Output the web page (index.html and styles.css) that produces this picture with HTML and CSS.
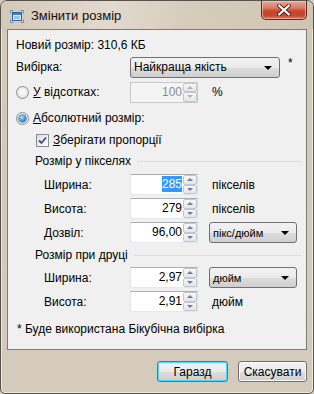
FILE: index.html
```html
<!DOCTYPE html>
<html lang="uk">
<head>
  <meta charset="UTF-8">
  <title>Змінити розмір</title>
  <link rel="stylesheet" href="styles.css">
</head>
<body>
  <div class="window">
    <div class="titlebar">
      <svg class="app-icon" width="14" height="13" viewBox="0 0 14 13">
        <path d="M0.5 3.5V0.5H3.5M10.5 0.5H13.5V3.5M13.5 9.5V12.5H10.5M3.5 12.5H0.5V9.5" fill="none" stroke="#6d8fb3" stroke-width="1"/>
        <rect x="2.5" y="2.5" width="9" height="8" fill="#dfeefb" stroke="#2f5f9e"/>
        <rect x="3" y="3" width="8" height="2" fill="#3f7fcf"/>
        <rect x="4" y="6" width="6" height="3" fill="#9cc5ee"/>
      </svg>
      <span class="title">Змінити розмір</span>
      <div class="close-btn">
        <svg width="14" height="12" viewBox="0 0 14 12">
          <path d="M2 1.5L12 10.5M12 1.5L2 10.5" stroke="#5a1f14" stroke-width="4" stroke-linecap="round"/>
          <path d="M2 1.5L12 10.5M12 1.5L2 10.5" stroke="#ffffff" stroke-width="2.2" stroke-linecap="round"/>
        </svg>
      </div>
    </div>

    <div class="panel">
      <div class="row row-size">Новий розмір: 310,6 КБ</div>

      <div class="row row-sample">
        <span class="lbl">Вибірка:</span>
        <div class="combo combo-wide">Найкраща якість<i class="arrow"></i></div>
        <span class="star">*</span>
      </div>

      <div class="row row-pct">
        <span class="lbl radio-lbl"><i class="radio"></i><span><u>У</u> відсотках:</span></span>
        <div class="numbox disabled"><span class="val">100</span><span class="spin"><b class="up"></b><b class="down"></b></span></div>
        <span class="unit">%</span>
      </div>

      <div class="row row-abs">
        <span class="radio-lbl"><i class="radio checked"></i><span><u>А</u>бсолютний розмір:</span></span>
      </div>

      <div class="row row-keep">
        <i class="check">
          <svg width="9" height="9" viewBox="0 0 9 9"><path d="M1 4.5L3.5 7L8 1.5" fill="none" stroke="#3b4f82" stroke-width="1.8"/></svg>
        </i>
        <span><u>З</u>берігати пропорції</span>
      </div>

      <div class="row group-head gh-pixels"><span>Розмір у пікселях</span><i class="line"></i></div>

      <div class="row field first">
        <span class="lbl sub">Ширина:</span>
        <div class="numbox"><span class="val"><em class="sel">285</em></span><span class="spin"><b class="up"></b><b class="down"></b></span></div>
        <span class="unit">пікселів</span>
      </div>
      <div class="row field">
        <span class="lbl sub">Висота:</span>
        <div class="numbox"><span class="val">279</span><span class="spin"><b class="up"></b><b class="down"></b></span></div>
        <span class="unit">пікселів</span>
      </div>
      <div class="row field">
        <span class="lbl sub">Дозвіл:</span>
        <div class="numbox"><span class="val">96,00</span><span class="spin"><b class="up"></b><b class="down"></b></span></div>
        <div class="combo combo-unit">пікс/дюйм<i class="arrow"></i></div>
      </div>

      <div class="row group-head gh-print"><span>Розмір при друці</span><i class="line"></i></div>

      <div class="row field first">
        <span class="lbl sub">Ширина:</span>
        <div class="numbox"><span class="val">2,97</span><span class="spin"><b class="up"></b><b class="down"></b></span></div>
        <div class="combo combo-unit">дюйм<i class="arrow"></i></div>
      </div>
      <div class="row field">
        <span class="lbl sub">Висота:</span>
        <div class="numbox"><span class="val">2,91</span><span class="spin"><b class="up"></b><b class="down"></b></span></div>
        <span class="unit">дюйм</span>
      </div>

      <div class="row note">* Буде використана Бікубічна вибірка</div>
    </div>

    <div class="buttons">
      <button class="btn default">Гаразд</button>
      <button class="btn">Скасувати</button>
    </div>
  </div>
</body>
</html>
```

FILE: styles.css
```css
* {
  box-sizing: border-box;
}
body {
  margin: 0;
  font-family: 'Liberation Sans', Arial, sans-serif;
  font-size: 12px;
  color: #000;
  background: #d4cbbc;
}
.window {
  width: 314px;
  height: 394px;
  border: 1px solid #57534c;
  border-radius: 7px 7px 5px 5px;
  background: linear-gradient(to bottom, #d9d0c2 0px, #d3c9b9 30px, #d4cbbd 100%);
  box-shadow: inset 0 0 0 1px #ece6dc;
  overflow: hidden;
}
.titlebar {
  height: 28px;
  display: flex;
  align-items: flex-start;
  background: linear-gradient(100deg, #d4c9b8 0%, #e2dace 35%, #d6ccbc 60%, #cfc5b4 100%);
}
.app-icon {
  margin: 9px 0 0 9px;
}
.title {
  margin: 7px 0 0 7px;
  font-size: 13px;
  color: #111;
}
.close-btn {
  margin-left: auto;
  margin-right: 6px;
  width: 46px;
  height: 19px;
  border: 1px solid #5e2a1f;
  border-top: none;
  border-radius: 0 0 5px 5px;
  background: linear-gradient(to bottom, #e9a894 0%, #d77a62 40%, #c8452b 55%, #c24a30 80%, #d8775c 100%);
  box-shadow: inset 0 0 0 1px rgba(255, 210, 190, 0.6);
  display: flex;
  align-items: center;
  justify-content: center;
}
.panel {
  margin: 0 6px;
  height: 321px;
  border: 1px solid #7f7a72;
  background: #f0f0f0;
  padding: 5px 5px 0 8px;
}
.row {
  display: flex;
  align-items: center;
}
.row-size {
  height: 20px;
}
.row-sample {
  height: 22px;
  margin-top: 1px;
}
.row-pct {
  height: 22px;
  margin-top: 3px;
}
.row-abs {
  height: 20px;
  margin-top: 5px;
}
.row-keep {
  height: 20px;
  margin-top: 2px;
  padding-left: 20px;
}
.lbl {
  width: 114px;
  flex-shrink: 0;
}
.lbl.sub {
  padding-left: 28px;
}
.radio-lbl {
  display: flex;
  align-items: center;
}
.radio {
  width: 13px;
  height: 13px;
  border-radius: 50%;
  border: 1px solid #8b8c8d;
  background: radial-gradient(circle at 50% 45%, #ffffff 0%, #f1f1f1 40%, #d5d6d8 100%);
  margin-right: 4px;
  position: relative;
}
.radio.checked::after {
  content: "";
  position: absolute;
  left: 2px;
  top: 2px;
  width: 7px;
  height: 7px;
  border-radius: 50%;
  background: radial-gradient(circle at 40% 35%, #bde8fb 0%, #4aa3dd 45%, #1c5a9c 100%);
  box-shadow: 0 0 0 0.5px #1a4a7a;
}
.check {
  width: 13px;
  height: 13px;
  border: 1px solid #8b8c8d;
  background: linear-gradient(135deg, #dcdcdc, #ffffff);
  margin-right: 4px;
  display: flex;
  align-items: center;
  justify-content: center;
}
.combo {
  height: 21px;
  border: 1px solid #707070;
  border-radius: 3px;
  background: linear-gradient(to bottom, #f2f2f2 0%, #ebebeb 50%, #dddddd 51%, #cfcfcf 100%);
  display: flex;
  align-items: center;
  padding-left: 3px;
  position: relative;
}
.combo-wide {
  width: 150px;
}
.combo-unit {
  width: 88px;
  margin-left: 11px;
  font-size: 11px;
}
.arrow {
  position: absolute;
  right: 7px;
  top: 8px;
  border-left: 4px solid transparent;
  border-right: 4px solid transparent;
  border-top: 4px solid #000;
}
.star {
  margin: -8px 0 0 8px;
}
.numbox {
  width: 68px;
  height: 21px;
  display: flex;
  border: 1px solid #abadb3;
  border-color: #abadb3 #dbdfe6 #e3e9ef #e2e3ea;
  background: #fff;
}
.numbox .val {
  flex: 1;
  text-align: right;
  padding-right: 1px;
  line-height: 19px;
}
.numbox.disabled {
  border-color: #c9c9c9;
  background: #f4f4f4;
}
.numbox.disabled .val {
  color: #8d8d8d;
}
.sel {
  font-style: normal;
  background: #3399ff;
  color: #fff;
  padding: 1px 0;
}
.spin {
  width: 14px;
  display: flex;
  flex-direction: column;
}
.spin b {
  flex: 1;
  border: 1px solid #c2c7cf;
  border-radius: 2px;
  background: linear-gradient(to bottom, #f7f7f7, #e4e6ea);
  display: flex;
  align-items: center;
  justify-content: center;
}
.spin .up::after {
  content: "";
  border-left: 3px solid transparent;
  border-right: 3px solid transparent;
  border-bottom: 3px solid #6a7c96;
}
.spin .down::after {
  content: "";
  border-left: 3px solid transparent;
  border-right: 3px solid transparent;
  border-top: 3px solid #6a7c96;
}
.disabled .spin .up::after {
  border-bottom-color: #b5b5b5;
}
.disabled .spin .down::after {
  border-top-color: #b5b5b5;
}
.unit {
  margin-left: 14px;
}
.group-head {
  padding-left: 19px;
}
.group-head .line {
  flex: 1;
  height: 1px;
  background: #d9dde3;
  margin-left: 6px;
}
.gh-pixels {
  height: 18px;
  margin-top: 2px;
}
.gh-print {
  height: 16px;
  margin-top: 4px;
}
.field {
  height: 21px;
  margin-top: 3px;
}
.field.first {
  margin-top: 4px;
}
.note {
  height: 16px;
  margin-top: 9px;
  padding-left: 1px;
}
.buttons {
  display: flex;
  justify-content: flex-end;
  gap: 10px;
  margin-top: 11px;
  padding-right: 6px;
}
.btn {
  height: 21px;
  width: 69px;
  font-family: inherit;
  font-size: 12px;
  border: 1px solid #707070;
  border-radius: 3px;
  background: linear-gradient(to bottom, #f2f2f2 0%, #ebebeb 50%, #dddddd 51%, #cfcfcf 100%);
  box-shadow: inset 0 0 0 1px #fcfcfc;
  padding: 0;
}
.btn.default {
  width: 71px;
  border-color: #3c7fb1;
  box-shadow: inset 0 0 0 1px #48d8fb;
}
```
